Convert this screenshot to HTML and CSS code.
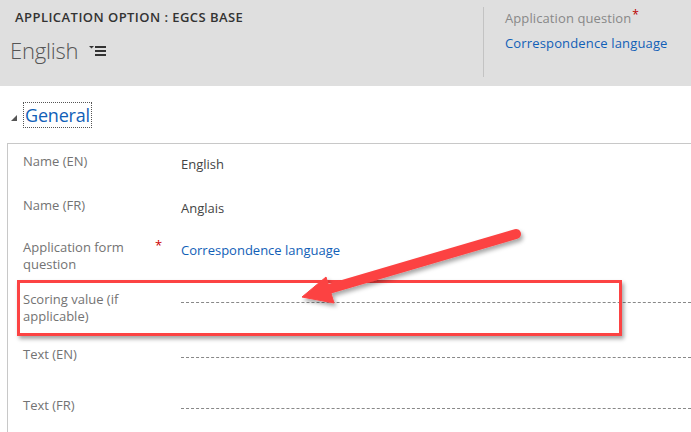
FILE: index.html
```html
<!DOCTYPE html>
<html>
<head>
<meta charset="utf-8">
<link rel="stylesheet" href="styles.css">
</head>
<body>
<div class="page">
  <header class="header">
    <div class="header-main">
      <div class="entity-title">APPLICATION OPTION : EGCS BASE</div>
      <div class="record-name">
        <span class="record-text">English</span>
        <svg class="record-menu" width="18" height="12" viewBox="0 0 18 12">
          <path d="M0 1 H5 L2.5 3.5 Z" fill="#333"/>
          <rect x="6" y="1" width="11" height="2" fill="#333"/>
          <rect x="6" y="5" width="11" height="2" fill="#333"/>
          <rect x="6" y="9" width="11" height="2" fill="#333"/>
        </svg>
      </div>
    </div>
    <div class="header-side">
      <div class="side-label">Application question<span class="req">*</span></div>
      <a class="link side-value">Correspondence language</a>
    </div>
  </header>

  <section class="section">
    <div class="section-head">
      <span class="collapse-tri"></span>
      <span class="section-title">General</span>
    </div>
    <div class="form-box">
      <div class="form-grid">
        <div class="lbl">Name (EN)</div><div class="star"></div><div class="val">English</div>
        <div class="lbl">Name (FR)</div><div class="star"></div><div class="val">Anglais</div>
        <div class="lbl">Application form question</div><div class="star">*</div><div class="val link">Correspondence language</div>
        <div class="lbl">Scoring value (if applicable)</div><div class="star"></div><div class="val empty"></div>
        <div class="lbl">Text (EN)</div><div class="star"></div><div class="val empty"></div>
        <div class="lbl">Text (FR)</div><div class="star"></div><div class="val empty"></div>
      </div>
    </div>
  </section>

  <div class="callout-box"></div>
  <svg class="callout-arrow" width="691" height="432" viewBox="0 0 691 432">
    <defs>
      <filter id="sh" x="-20%" y="-20%" width="140%" height="160%">
        <feDropShadow dx="2" dy="3" stdDeviation="2" flood-color="#000" flood-opacity="0.35"/>
      </filter>
    </defs>
    <g filter="url(#sh)" fill="#fc4343" stroke="#fc4343">
      <line x1="516" y1="234" x2="322" y2="291" stroke-width="10" stroke-linecap="round"/>
      <polygon points="302,297 326,277 334,303" stroke-width="1" stroke-linejoin="round"/>
    </g>
  </svg>
</div>
</body>
</html>
```
FILE: styles.css
```css
html, body {
  margin: 0;
  padding: 0;
  background: #fff;
}
body {
  font-family: "Open Sans", "Noto Sans", sans-serif;
  color: #444;
  width: 691px;
  height: 432px;
  overflow: hidden;
}
.page {
  position: relative;
  width: 691px;
  height: 432px;
}
.header {
  display: flex;
  height: 86px;
  background: #dfdfdf;
}
.header-main {
  flex: 1;
  padding: 8px 0 0 15px;
}
.entity-title {
  font-size: 13px;
  font-weight: 600;
  color: #333;
  line-height: 18px;
  letter-spacing: 0.45px;
}
.record-name {
  display: flex;
  align-items: center;
  margin: 9px 0 0 -5px;
}
.record-text {
  font-size: 22px;
  font-weight: 300;
  color: #555;
  line-height: 30px;
  letter-spacing: -0.2px;
}
.record-menu {
  margin: 2px 0 0 11px;
}
.header-side {
  width: 186px;
  margin: 7px 0 9px;
  border-left: 1px solid #c3c3c3;
  padding-left: 21px;
}
.side-label {
  font-size: 13px;
  color: #888;
  line-height: 17px;
  margin-top: -1px;
  letter-spacing: 0.1px;
}
.req {
  color: #b00;
  font-size: 12px;
  vertical-align: 4px;
  margin-left: 1px;
}
.link {
  color: #1160b7;
}
.side-value {
  display: block;
  font-size: 13px;
  line-height: 17px;
  margin-top: 8px;
  letter-spacing: 0.15px;
}
.section {
  padding-top: 16px;
}
.section-head {
  display: flex;
  align-items: center;
  padding-left: 11px;
  height: 26px;
}
.collapse-tri {
  width: 0;
  height: 0;
  border-style: solid;
  border-width: 0 0 6px 6px;
  border-color: transparent transparent #555 transparent;
  margin: 5px 6px 0 0;
}
.section-title {
  font-size: 18px;
  color: #1160b7;
  line-height: 24px;
  border: 1px dotted #555;
  padding: 0 1px;
  letter-spacing: -0.2px;
}
.form-box {
  margin: 15px 0 0 7px;
  border-top: 1px solid #c8c8c8;
  border-left: 1px solid #c8c8c8;
  padding: 9px 0 0 15px;
  height: 300px;
}
.form-grid {
  display: grid;
  grid-template-columns: 132px 26px 1fr;
  grid-template-rows: 44px 42px 52px 55px 51px 40px;
}
.lbl {
  font-size: 13px;
  line-height: 17px;
  color: #737373;
  width: 125px;
}
.star {
  color: #c00;
  font-size: 13px;
  line-height: 13px;
}
.val {
  font-size: 13px;
  line-height: 17px;
  margin-top: 3px;
}
.val.empty {
  margin-top: 0;
  height: 11px;
  border-bottom: 1px dashed #888;
}
.callout-box {
  position: absolute;
  left: 17px;
  top: 280px;
  width: 599px;
  height: 50px;
  border: 3px solid #fc4343;
  box-shadow: 2px 3px 4px rgba(0, 0, 0, 0.35);
}
.callout-arrow {
  position: absolute;
  left: 0;
  top: 0;
}
```
